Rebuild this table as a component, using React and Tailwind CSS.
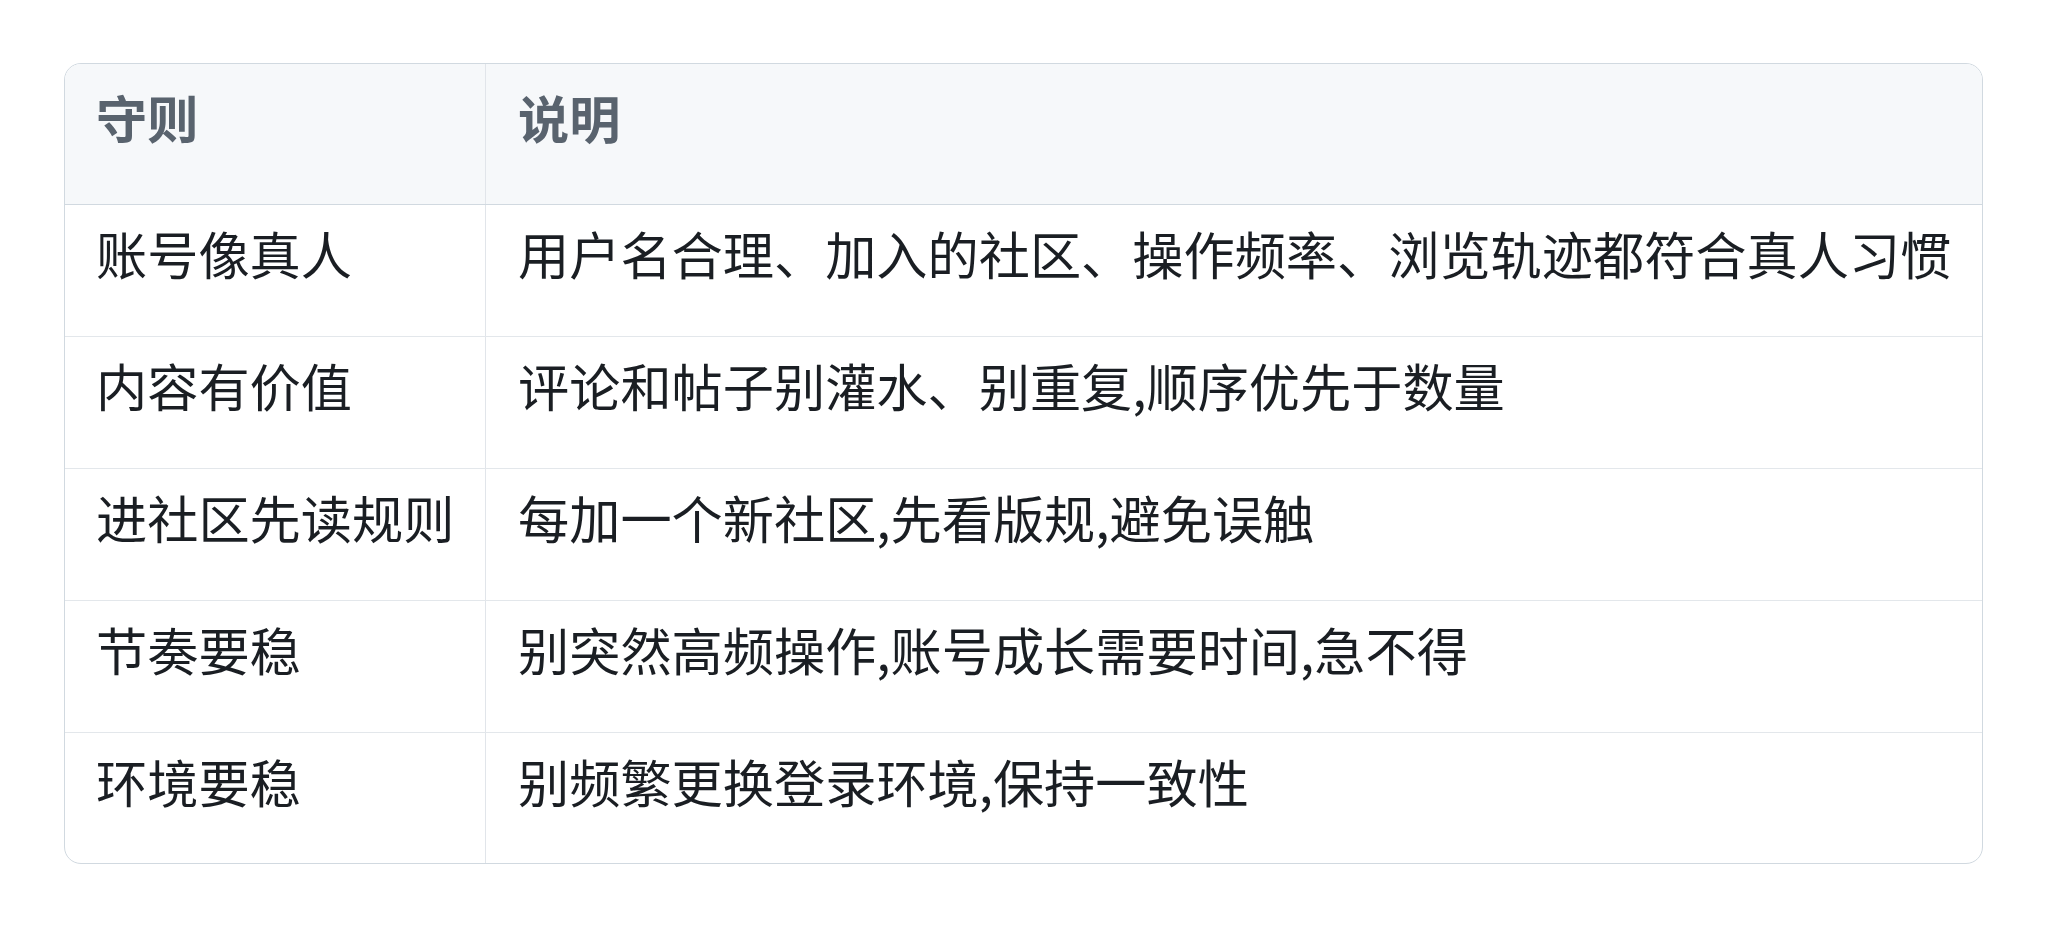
export default function App() {
  const rows = [
    ["账号像真人", "用户名合理、加入的社区、操作频率、浏览轨迹都符合真人习惯"],
    ["内容有价值", "评论和帖子别灌水、别重复,顺序优先于数量"],
    ["进社区先读规则", "每加一个新社区,先看版规,避免误触"],
    ["节奏要稳", "别突然高频操作,账号成长需要时间,急不得"],
    ["环境要稳", "别频繁更换登录环境,保持一致性"],
  ];
  return (
    <div
      className="min-h-screen bg-white pt-[63px] px-16"
      style={{ fontFamily: '"Noto Sans CJK SC", "Noto Sans", sans-serif' }}
    >
      <div className="border border-[#d1d9e0] rounded-[17px] overflow-hidden text-[51.2px] leading-[77px]">
        <div className="grid grid-cols-[421px_1fr] bg-[#f6f8fa] border-b border-[#d1d9e0] h-[141px]">
          <div className="border-r border-[#e1e5ea] pl-[31px] pt-[15px] font-bold text-[#59636e]">守则</div>
          <div className="pl-[32px] pt-[15px] font-bold text-[#59636e]">说明</div>
        </div>
        {rows.map((r, i) => (
          <div
            key={i}
            className={
              "grid grid-cols-[421px_1fr] text-[#1a1e23] " +
              (i < rows.length - 1 ? "h-[132px] border-b border-[#e3e7eb]" : "h-[130px]")
            }
          >
            <div className="border-r border-[#e1e5ea] pl-[31px] pt-[10px] whitespace-nowrap">{r[0]}</div>
            <div className="pl-[32px] pt-[10px] whitespace-nowrap">{r[1]}</div>
          </div>
        ))}
      </div>
    </div>
  );
}
